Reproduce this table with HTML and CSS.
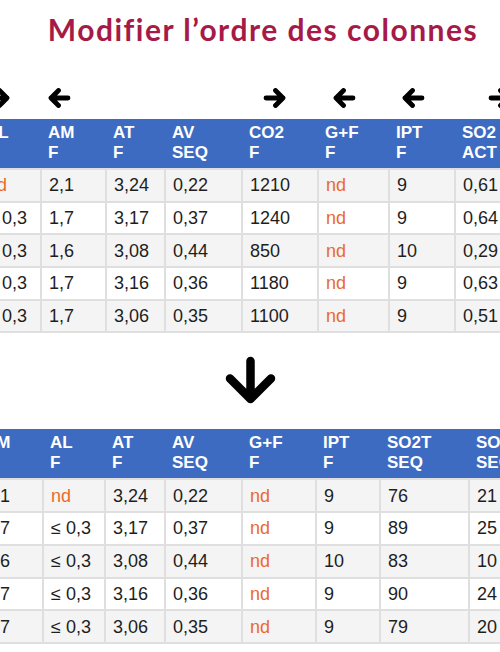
FILE: index.html
```html
<!DOCTYPE html>
<html lang="fr">
<head>
<meta charset="utf-8">
<title>Modifier l’ordre des colonnes</title>
<link rel="stylesheet" href="styles.css">
</head>
<body>
<h1 class="title">Modifier l’ordre des colonnes</h1>

<section class="top">
  <div class="arrows">
    <span class="slot s-al"><svg class="arr" viewBox="0 0 23 20"><path d="M3 10H20M12.5 2.5l7.5 7.5-7.5 7.5"/></svg></span>
    <span class="slot s-am"><svg class="arr" viewBox="0 0 23 20"><path d="M20 10H3M10.5 2.5l-7.5 7.5 7.5 7.5"/></svg></span>
    <span class="slot"></span>
    <span class="slot"></span>
    <span class="slot s-co2"><svg class="arr" viewBox="0 0 23 20"><path d="M3 10H20M12.5 2.5l7.5 7.5-7.5 7.5"/></svg></span>
    <span class="slot s-gf"><svg class="arr" viewBox="0 0 23 20"><path d="M20 10H3M10.5 2.5l-7.5 7.5 7.5 7.5"/></svg></span>
    <span class="slot s-ipt"><svg class="arr" viewBox="0 0 23 20"><path d="M20 10H3M10.5 2.5l-7.5 7.5 7.5 7.5"/></svg></span>
    <span class="slot s-so2"><svg class="arr" viewBox="0 0 23 20"><path d="M3 10H20M12.5 2.5l7.5 7.5-7.5 7.5"/></svg></span>
  </div>
  <div class="clip">
    <table class="grid t1">
      <colgroup>
        <col class="w62"><col class="w65"><col class="w59"><col class="w77"><col class="w76"><col class="w71"><col class="w66"><col class="w70">
      </colgroup>
      <thead>
        <tr><th>AL<br>F</th><th>AM<br>F</th><th>AT<br>F</th><th>AV<br>SEQ</th><th>CO2<br>F</th><th>G+F<br>F</th><th>IPT<br>F</th><th>SO2<br>ACT</th></tr>
      </thead>
      <tbody>
        <tr><td class="nd">nd</td><td>2,1</td><td>3,24</td><td>0,22</td><td>1210</td><td class="nd">nd</td><td>9</td><td>0,61</td></tr>
        <tr><td>≤ 0,3</td><td>1,7</td><td>3,17</td><td>0,37</td><td>1240</td><td class="nd">nd</td><td>9</td><td>0,64</td></tr>
        <tr><td>≤ 0,3</td><td>1,6</td><td>3,08</td><td>0,44</td><td>850</td><td class="nd">nd</td><td>10</td><td>0,29</td></tr>
        <tr><td>≤ 0,3</td><td>1,7</td><td>3,16</td><td>0,36</td><td>1180</td><td class="nd">nd</td><td>9</td><td>0,63</td></tr>
        <tr><td>≤ 0,3</td><td>1,7</td><td>3,06</td><td>0,35</td><td>1100</td><td class="nd">nd</td><td>9</td><td>0,51</td></tr>
      </tbody>
    </table>
  </div>
</section>

<div class="down">
  <svg class="darr" viewBox="0 0 53 49"><path d="M26.5 5V43M6 22.5l20.5 20.5 20.5-20.5"/></svg>
</div>

<section class="bottom">
  <div class="clip">
    <table class="grid t2">
      <colgroup>
        <col class="w66"><col class="w62"><col class="w60"><col class="w77"><col class="w74"><col class="w64"><col class="w89"><col class="w60">
      </colgroup>
      <thead>
        <tr><th>AM<br>F</th><th>AL<br>F</th><th>AT<br>F</th><th>AV<br>SEQ</th><th>G+F<br>F</th><th>IPT<br>F</th><th>SO2T<br>SEQ</th><th>SO2<br>SEQ</th></tr>
      </thead>
      <tbody>
        <tr><td>2,1</td><td class="nd">nd</td><td>3,24</td><td>0,22</td><td class="nd">nd</td><td>9</td><td>76</td><td>21</td></tr>
        <tr><td>1,7</td><td>≤ 0,3</td><td>3,17</td><td>0,37</td><td class="nd">nd</td><td>9</td><td>89</td><td>25</td></tr>
        <tr><td>1,6</td><td>≤ 0,3</td><td>3,08</td><td>0,44</td><td class="nd">nd</td><td>10</td><td>83</td><td>10</td></tr>
        <tr><td>1,7</td><td>≤ 0,3</td><td>3,16</td><td>0,36</td><td class="nd">nd</td><td>9</td><td>90</td><td>24</td></tr>
        <tr><td>1,7</td><td>≤ 0,3</td><td>3,06</td><td>0,35</td><td class="nd">nd</td><td>9</td><td>79</td><td>20</td></tr>
      </tbody>
    </table>
  </div>
</section>
</body>
</html>
```

FILE: styles.css
```css
* { box-sizing: border-box; }

html, body {
  margin: 0;
  padding: 0;
  background: #ffffff;
  width: 500px;
  overflow: hidden;
}

body {
  font-family: "Liberation Sans", Arial, sans-serif;
  color: #1e1e1e;
}

.title {
  margin: 0;
  padding-top: 11px;
  padding-left: 26px;
  height: 48px;
  font-family: Lato, "Open Sans", sans-serif;
  font-weight: 700;
  font-size: 30px;
  letter-spacing: 1.5px;
  line-height: 36px;
  text-align: center;
  white-space: nowrap;
  color: #a61a47;
}

.top {
  margin-top: 40px;
}

.arrows {
  display: grid;
  grid-template-columns: 62px 65px 59px 77px 76px 71px 66px 70px;
  margin-left: -22px;
  height: 20px;
}

.slot { display: block; height: 20px; }
.s-al { padding-left: 9px; }
.s-am { padding-left: 8px; }
.s-co2 { padding-left: 22px; }
.s-gf { padding-left: 16px; }
.s-ipt { padding-left: 14px; }
.s-so2 { padding-left: 34px; }

.arr {
  display: block;
  width: 23px;
  height: 20px;
  fill: none;
  stroke: #000;
  stroke-width: 4.8;
  stroke-linecap: round;
  stroke-linejoin: round;
}

.clip {
  width: 500px;
  overflow: hidden;
}

.top .clip { margin-top: 11px; }

.grid {
  border-collapse: collapse;
  table-layout: fixed;
  font-size: 18px;
}

.t1 { width: 546px; margin-left: -22px; }
.t2 { width: 552px; margin-left: -24px; }

.w59 { width: 59px; }
.w60 { width: 60px; }
.w62 { width: 62px; }
.w64 { width: 64px; }
.w65 { width: 65px; }
.w66 { width: 66px; }
.w70 { width: 70px; }
.w71 { width: 71px; }
.w74 { width: 74px; }
.w76 { width: 76px; }
.w77 { width: 77px; }
.w89 { width: 89px; }

.grid th {
  background: #3d6bc1;
  color: #ffffff;
  font-weight: 700;
  font-size: 17px;
  line-height: 20px;
  text-align: left;
  vertical-align: top;
  padding: 4px 7px 5px;
  height: 49px;
  border: 0;
  white-space: nowrap;
}

.grid td {
  height: 32.7px;
  padding: 0 7px;
  line-height: 20px;
  border: 2px solid #dfdfdf;
  white-space: nowrap;
  vertical-align: middle;
}

.grid tbody tr:nth-child(odd) td { background: #f4f4f4; }
.grid tbody tr:nth-child(even) td { background: #ffffff; }

.grid td.nd { color: #ea6a2c; }

.down {
  display: flex;
  justify-content: center;
  margin-top: 23px;
  height: 49px;
}

.darr {
  display: block;
  width: 53px;
  height: 49px;
  fill: none;
  stroke: #000;
  stroke-width: 8.5;
  stroke-linecap: round;
  stroke-linejoin: round;
}

.bottom { margin-top: 24px; }
```
